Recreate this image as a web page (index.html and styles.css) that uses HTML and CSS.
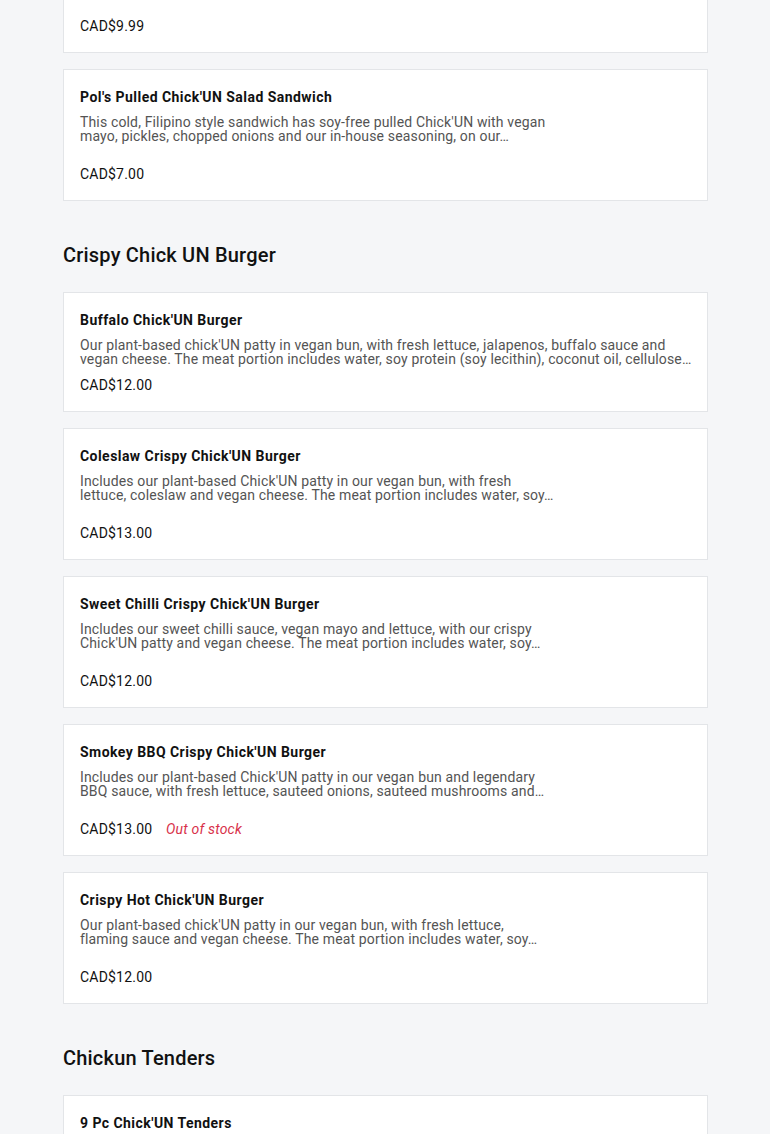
FILE: index.html
```html
<!DOCTYPE html>
<html>
<head>
<meta charset="utf-8">
<link rel="stylesheet" href="styles.css">
</head>
<body>
<div class="menu">

<div class="items">
<div class="item has-photo">
<div class="info">
<div class="name">Pulled Chick'UN Sandwich</div>
<div class="desc">Our soy-free pulled Chick'UN with vegan mayo, fresh lettuce and<br>our in-house seasoning, served on our vegan bun with pickles…</div>
<div class="price">CAD$9.99</div>
</div>
</div>

<div class="item has-photo">
<div class="info">
<div class="name">Pol's Pulled Chick'UN Salad Sandwich</div>
<div class="desc">This cold, Filipino style sandwich has soy-free pulled Chick'UN with vegan<br>mayo, pickles, chopped onions and our in-house seasoning, on our…</div>
<div class="price">CAD$7.00</div>
</div>
</div>
</div>

<h2>Crispy Chick UN Burger</h2>

<div class="items">
<div class="item">
<div class="info">
<div class="name">Buffalo Chick'UN Burger</div>
<div class="desc">Our plant-based chick'UN patty in vegan bun, with fresh lettuce, jalapenos, buffalo sauce and<br>vegan cheese. The meat portion includes water, soy protein (soy lecithin), coconut oil, cellulose…</div>
<div class="price">CAD$12.00</div>
</div>
</div>

<div class="item has-photo">
<div class="info">
<div class="name">Coleslaw Crispy Chick'UN Burger</div>
<div class="desc">Includes our plant-based Chick'UN patty in our vegan bun, with fresh<br>lettuce, coleslaw and vegan cheese. The meat portion includes water, soy…</div>
<div class="price">CAD$13.00</div>
</div>
</div>

<div class="item has-photo">
<div class="info">
<div class="name">Sweet Chilli Crispy Chick'UN Burger</div>
<div class="desc">Includes our sweet chilli sauce, vegan mayo and lettuce, with our crispy<br>Chick'UN patty and vegan cheese. The meat portion includes water, soy…</div>
<div class="price">CAD$12.00</div>
</div>
</div>

<div class="item has-photo">
<div class="info">
<div class="name">Smokey BBQ Crispy Chick'UN Burger</div>
<div class="desc">Includes our plant-based Chick'UN patty in our vegan bun and legendary<br>BBQ sauce, with fresh lettuce, sauteed onions, sauteed mushrooms and…</div>
<div class="price">CAD$13.00 <span class="stock">Out of stock</span></div>
</div>
</div>

<div class="item has-photo">
<div class="info">
<div class="name">Crispy Hot Chick'UN Burger</div>
<div class="desc">Our plant-based chick'UN patty in our vegan bun, with fresh lettuce,<br>flaming sauce and vegan cheese. The meat portion includes water, soy…</div>
<div class="price">CAD$12.00</div>
</div>
</div>
</div>

<h2>Chickun Tenders</h2>

<div class="items">
<div class="item has-photo">
<div class="info">
<div class="name">9 Pc Chick'UN Tenders</div>
<div class="desc">Nine of our crispy plant-based Chick'UN tenders with your choice<br>of dipping sauce, served with a side of fries…</div>
<div class="price">CAD$14.00</div>
</div>
</div>
</div>

</div>
</body>
</html>
```

FILE: styles.css
```css
body {
    margin: 0;
    background: #f5f6f8;
    font-family: Roboto, "Liberation Sans", sans-serif;
    color: #000;
}

.menu {
    width: 645px;
    margin-left: 63px;
    margin-top: -79px;
}

.items {
    display: flex;
    flex-direction: column;
    gap: 16px;
}

h2 {
    margin: 40px 0 23px 0;
    font-size: 20px;
    line-height: 28px;
    font-weight: 500;
    letter-spacing: 0.2px;
    color: #111;
}

.item {
    background: #fff;
    border: 1px solid #e3e5e8;
    padding: 17px 16px 16px 16px;
}

.info {
    display: flex;
    flex-direction: column;
}

.has-photo .info {
    width: 480px;
    min-height: 97px;
}

.name {
    font-size: 14px;
    line-height: 20px;
    font-weight: 700;
    letter-spacing: 0.45px;
    color: #111;
}

/* text is already cut to two lines, as the menu shows it */
.desc {
    margin-top: 8px;
    font-size: 14px;
    line-height: 14px;
    letter-spacing: 0.15px;
    white-space: nowrap;
    color: #545454;
}

.price {
    margin-top: auto;
    padding-top: 9px;
    font-size: 14px;
    line-height: 20px;
    letter-spacing: 0.2px;
    color: #111;
}

.stock {
    margin-left: 10px;
    font-style: italic;
    color: #d8314a;
}
```
